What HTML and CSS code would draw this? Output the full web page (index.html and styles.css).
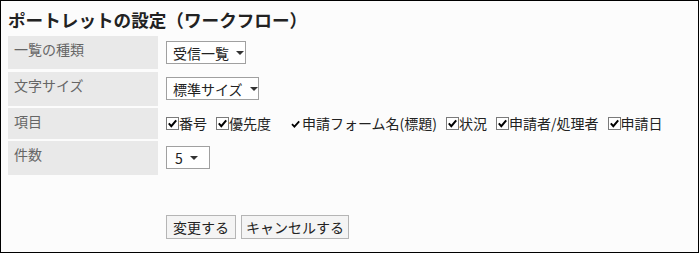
FILE: index.html
```html
<!DOCTYPE html>
<html lang="ja">
<head>
<meta charset="utf-8">
<link rel="stylesheet" href="styles.css">
</head>
<body>
<div class="frame">
  <h1 class="title">ポートレットの設定（ワークフロー）</h1>
  <div class="form">
    <div class="row r1">
      <div class="label">一覧の種類</div>
      <div class="value"><span class="select s1">受信一覧<i class="arrow"></i></span></div>
    </div>
    <div class="row r2">
      <div class="label">文字サイズ</div>
      <div class="value"><span class="select s2">標準サイズ<i class="arrow"></i></span></div>
    </div>
    <div class="row r3">
      <div class="label">項目</div>
      <div class="value checks">
        <span class="item"><svg class="cb" width="13" height="13" viewBox="0 0 13 13"><rect x="0.5" y="0.5" width="12" height="12" fill="#fff" stroke="#7a7a7a"/><path d="M2.8 6.4 L5.3 9.2 L10.2 3.4" fill="none" stroke="#000" stroke-width="2"/></svg>番号</span>
        <span class="item"><svg class="cb" width="13" height="13" viewBox="0 0 13 13"><rect x="0.5" y="0.5" width="12" height="12" fill="#fff" stroke="#7a7a7a"/><path d="M2.8 6.4 L5.3 9.2 L10.2 3.4" fill="none" stroke="#000" stroke-width="2"/></svg>優先度</span>
        <span class="item fixed"><svg class="cb" width="13" height="13" viewBox="0 0 13 13"><path d="M3 7.2 L5.4 9.6 L10.2 4.4" fill="none" stroke="#000" stroke-width="1.8"/></svg>申請フォーム名(標題)</span>
        <span class="item"><svg class="cb" width="13" height="13" viewBox="0 0 13 13"><rect x="0.5" y="0.5" width="12" height="12" fill="#fff" stroke="#7a7a7a"/><path d="M2.8 6.4 L5.3 9.2 L10.2 3.4" fill="none" stroke="#000" stroke-width="2"/></svg>状況</span>
        <span class="item"><svg class="cb" width="13" height="13" viewBox="0 0 13 13"><rect x="0.5" y="0.5" width="12" height="12" fill="#fff" stroke="#7a7a7a"/><path d="M2.8 6.4 L5.3 9.2 L10.2 3.4" fill="none" stroke="#000" stroke-width="2"/></svg>申請者/処理者</span>
        <span class="item"><svg class="cb" width="13" height="13" viewBox="0 0 13 13"><rect x="0.5" y="0.5" width="12" height="12" fill="#fff" stroke="#7a7a7a"/><path d="M2.8 6.4 L5.3 9.2 L10.2 3.4" fill="none" stroke="#000" stroke-width="2"/></svg>申請日</span>
      </div>
    </div>
    <div class="row r4">
      <div class="label">件数</div>
      <div class="value"><span class="select s3">5<i class="arrow"></i></span></div>
    </div>
  </div>
  <div class="buttons">
    <span class="btn b1">変更する</span>
    <span class="btn b2">キャンセルする</span>
  </div>
</div>
</body>
</html>
```

FILE: styles.css
```css
html, body {
  margin: 0;
  padding: 0;
  background: #fff;
}
body {
  font-family: "Noto Sans CJK JP", "Noto Sans", sans-serif;
  font-size: 14px;
  color: #333;
}
.frame {
  box-sizing: border-box;
  width: 699px;
  height: 253px;
  border: 1px solid #000;
  background: #fcfcfc;
  padding: 0 0 0 7px;
}
.title {
  margin: 0;
  padding-top: 8px;
  font-size: 17.6px;
  font-weight: bold;
  line-height: 22px;
  height: 27px;
  color: #222;
}
.form {
  display: flex;
  flex-direction: column;
}
.row {
  display: flex;
}
.r1 { height: 33px; margin-bottom: 3px; }
.r2 { height: 34px; margin-bottom: 2px; }
.r3 { height: 31px; margin-bottom: 2px; }
.r4 { height: 34px; }
.label {
  width: 144px;
  background: #e9e9e9;
  color: #666;
  padding: 3px 0 0 6px;
  line-height: 20px;
}
.value {
  padding-left: 8px;
  padding-top: 5px;
  display: flex;
  align-items: flex-start;
}
.select {
  box-sizing: border-box;
  height: 23px;
  border: 1px solid #a0a0a0;
  background: #fff;
  color: #222;
  display: flex;
  align-items: center;
  padding-left: 6px;
  line-height: 20px;
}
.s1 { width: 80px; }
.s2 { width: 93px; }
.s3 { width: 44px; padding-left: 8px; }
.arrow {
  width: 0;
  height: 0;
  border-left: 4px solid transparent;
  border-right: 4px solid transparent;
  border-top: 4px solid #333;
  margin-left: 7px;
  margin-top: 1px;
}
.checks {
  padding-top: 6px;
  gap: 9px;
  color: #222;
}
.item {
  display: flex;
  align-items: center;
  line-height: 18px;
  white-space: nowrap;
}
.cb {
  flex: none;
  margin-top: 1px;
}
.item.fixed {
  margin-left: 9px;
}
.buttons {
  display: flex;
  gap: 5px;
  padding-left: 158px;
  margin-top: 40px;
}
.btn {
  box-sizing: border-box;
  height: 24px;
  border: 1px solid #b5b5b5;
  background: #f4f4f4;
  color: #222;
  display: flex;
  align-items: center;
  justify-content: center;
  line-height: 20px;
}
.b1 { width: 70px; }
.b2 { width: 108px; }
```
